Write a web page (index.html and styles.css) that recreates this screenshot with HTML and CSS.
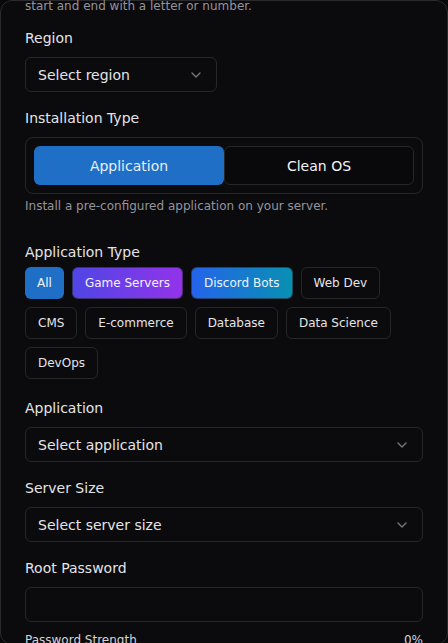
FILE: index.html
```html
<!DOCTYPE html>
<html lang="en">
<head>
<meta charset="utf-8">
<title>Create Server</title>
<link rel="stylesheet" href="styles.css">
</head>
<body>
<div class="card">
  <p class="hint hint-top">start and end with a letter or number.</p>

  <div class="field region">
    <label class="label">Region</label>
    <button class="select select-narrow" type="button">
      <span>Select region</span>
      <svg class="chev" width="16" height="16" viewBox="0 0 24 24" fill="none" stroke="currentColor" stroke-width="2" stroke-linecap="round" stroke-linejoin="round"><path d="m6 9 6 6 6-6"/></svg>
    </button>
  </div>

  <div class="field install">
    <label class="label">Installation Type</label>
    <div class="toggle">
      <button class="seg seg-active" type="button">Application</button>
      <button class="seg seg-outline" type="button">Clean OS</button>
    </div>
    <p class="hint hint-install">Install a pre-configured application on your server.</p>
  </div>

  <div class="field apptype">
    <label class="label label-tight">Application Type</label>
    <div class="chips">
      <button class="chip chip-all" type="button">All</button>
      <button class="chip chip-game" type="button">Game Servers</button>
      <button class="chip chip-discord" type="button">Discord Bots</button>
      <button class="chip" type="button">Web Dev</button>
      <button class="chip" type="button">CMS</button>
      <button class="chip" type="button">E-commerce</button>
      <button class="chip" type="button">Database</button>
      <button class="chip" type="button">Data Science</button>
      <button class="chip" type="button">DevOps</button>
    </div>
  </div>

  <div class="field app">
    <label class="label">Application</label>
    <button class="select" type="button">
      <span>Select application</span>
      <svg class="chev" width="16" height="16" viewBox="0 0 24 24" fill="none" stroke="currentColor" stroke-width="2" stroke-linecap="round" stroke-linejoin="round"><path d="m6 9 6 6 6-6"/></svg>
    </button>
  </div>

  <div class="field size">
    <label class="label">Server Size</label>
    <button class="select" type="button">
      <span>Select server size</span>
      <svg class="chev" width="16" height="16" viewBox="0 0 24 24" fill="none" stroke="currentColor" stroke-width="2" stroke-linecap="round" stroke-linejoin="round"><path d="m6 9 6 6 6-6"/></svg>
    </button>
  </div>

  <div class="field pass">
    <label class="label">Root Password</label>
    <input class="input" type="password">
  </div>

  <div class="strength">
    <span>Password Strength</span>
    <span>0%</span>
  </div>
</div>
</body>
</html>
```
FILE: styles.css
```css
* {
  box-sizing: border-box;
  margin: 0;
  padding: 0;
}

html,
body {
  background: #09090b;
  overflow: hidden;
}

body {
  font-family: "DejaVu Sans", sans-serif;
  color: #e4e4e7;
}

.card {
  height: 645px;
  border: 1px solid #2a2a2e;
  border-radius: 12px;
  background: #0b0b0e;
  padding: 0 24px;
}

.hint {
  font-size: 12px;
  line-height: 16px;
  color: #94949b;
}

.hint-top {
  margin-top: -3px;
}

.hint-install {
  margin-top: 4px;
}

.label {
  display: block;
  padding-top: 1px;
  font-size: 14px;
  line-height: 20px;
  color: #e4e4e7;
  margin-bottom: 9px;
}

.label-tight {
  margin-bottom: 5px;
}

.region {
  margin-top: 13px;
}

.install {
  margin-top: 15px;
}

.apptype {
  margin-top: 27px;
}

.app {
  margin-top: 18px;
}

.size,
.pass {
  margin-top: 15px;
}

.select {
  display: flex;
  align-items: center;
  justify-content: space-between;
  width: 100%;
  height: 35px;
  padding: 0 12px;
  border: 1px solid #27272a;
  border-radius: 6px;
  background: transparent;
  font-family: inherit;
  font-size: 14px;
  line-height: 20px;
  color: #e4e4e7;
  text-align: left;
}

.select-narrow {
  width: 192px;
}

.chev {
  color: #e4e4e7;
  opacity: 0.5;
  flex: none;
}

.toggle {
  display: flex;
  padding: 8px;
  border: 1px solid #27272a;
  border-radius: 8px;
}

.seg {
  flex: 1;
  height: 39px;
  border-radius: 6px;
  font-family: inherit;
  font-size: 14px;
  border: 1px solid transparent;
}

.seg-active {
  background: #1f6fc6;
  color: #e8eef8;
}

.seg-outline {
  background: #09090b;
  border-color: #27272a;
  color: #f4f4f5;
}

.chips {
  display: flex;
  flex-wrap: wrap;
  gap: 8px;
}

.chip {
  display: inline-flex;
  align-items: center;
  height: 32px;
  padding: 0 12px;
  border: 1px solid #27272a;
  border-radius: 6px;
  background: transparent;
  font-family: inherit;
  font-size: 12px;
  color: #e4e4e7;
}

.chip-all {
  border: 0;
  background: #1f6fc6;
  color: #eef3fa;
}

.chip-game {
  border-color: rgba(39, 39, 42, 0.6);
  background: linear-gradient(90deg, #4f46e5, #9333ea);
  background-origin: border-box;
  color: #f4f0fd;
}

.chip-discord {
  border-color: rgba(39, 39, 42, 0.6);
  background: linear-gradient(90deg, #2563eb, #0891b2);
  background-origin: border-box;
  color: #eef4fb;
}

.input {
  display: block;
  width: 100%;
  height: 35px;
  padding: 0 12px;
  border: 1px solid #27272a;
  border-radius: 6px;
  background: transparent;
  color: #e4e4e7;
  font-family: inherit;
  font-size: 14px;
  outline: none;
}

.strength {
  display: flex;
  justify-content: space-between;
  margin-top: 10px;
  font-size: 12px;
  line-height: 16px;
  color: #d4d4d8;
}
```
